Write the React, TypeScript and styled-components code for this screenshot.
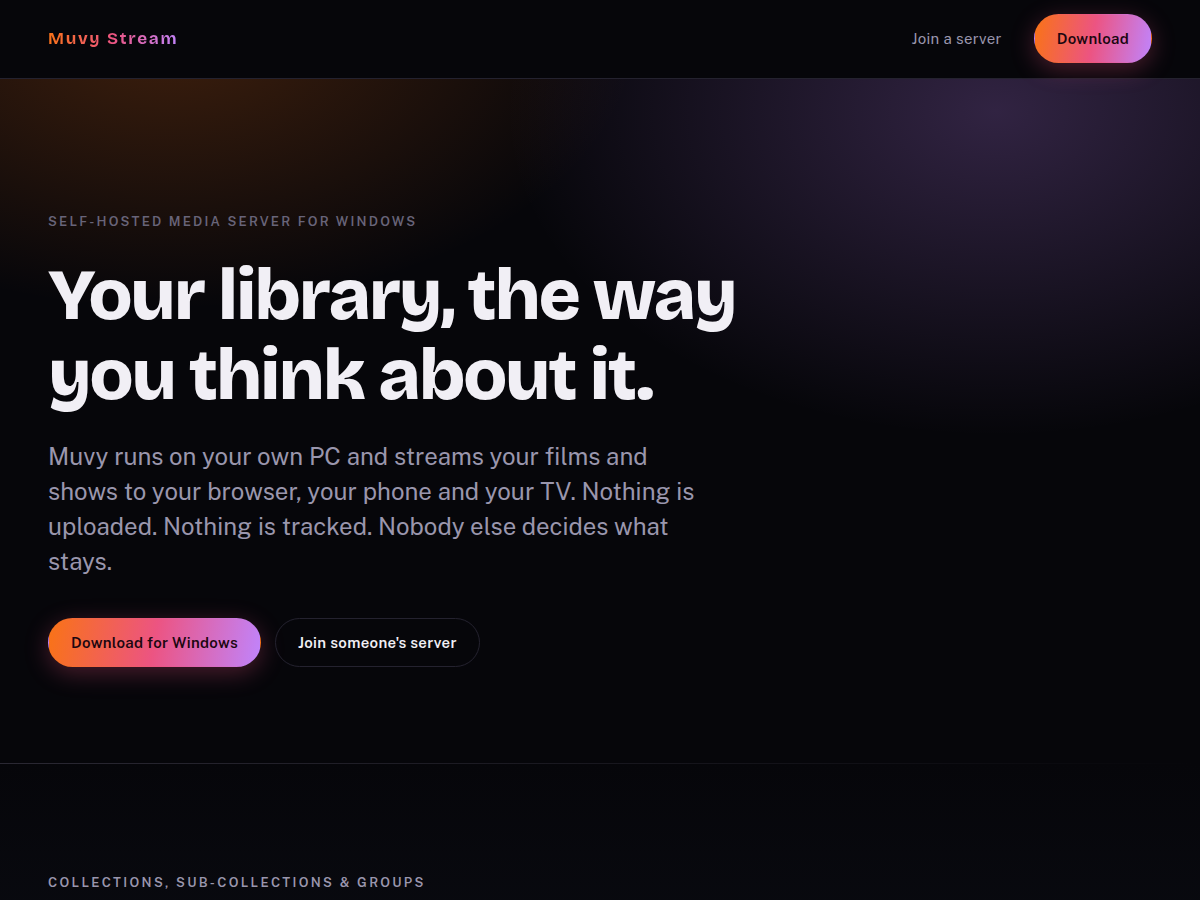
import React from 'react';
import styled, { createGlobalStyle, css } from 'styled-components';

const sans = `"Public Sans", Inter, "Liberation Sans", sans-serif`;
const display = `"Bricolage Grotesque", Inter, "Liberation Sans", sans-serif`;
const brandGradient = 'linear-gradient(100deg, #f97316 0%, #ec5482 50%, #c084fc 100%)';

const GlobalStyle = createGlobalStyle`
  *, *::before, *::after { box-sizing: border-box; }
  body {
    margin: 0;
    background: #06060a;
    color: #f1eff5;
    font-family: ${sans};
    font-size: 15px;
    -webkit-font-smoothing: antialiased;
  }
  h1, p { margin: 0; }
`;

const Header = styled.header`
  position: relative;
  z-index: 1;
  display: flex;
  align-items: center;
  justify-content: space-between;
  padding: 14px 48px 15px;
  border-bottom: 1px solid #24222f;
  background: #06060a;
`;

const Brand = styled.a`
  font-family: ${display};
  font-size: 17px;
  line-height: 24px;
  font-weight: 700;
  letter-spacing: 0.1em;
  text-decoration: none;
  color: transparent;
  background: ${brandGradient};
  background-clip: text;
  -webkit-background-clip: text;
`;

const Nav = styled.nav`
  display: flex;
  align-items: center;
  gap: 32px;
`;

const NavLink = styled.a`
  color: #9a96ad;
  font-size: 15px;
  letter-spacing: 0.02em;
  text-decoration: none;
`;

const ButtonLink = styled.a<{ $primary?: boolean }>`
  display: inline-flex;
  align-items: center;
  height: 49px;
  padding: 0 22px;
  border: 1px solid #24222f;
  border-radius: 999px;
  font-size: 15px;
  font-weight: 600;
  letter-spacing: 0.02em;
  text-decoration: none;
  white-space: nowrap;
  color: #f1eff5;
  ${({ $primary }) =>
    $primary &&
    css`
      border-color: transparent;
      background: ${brandGradient};
      color: #1c0710;
      box-shadow: 0 6px 24px rgba(236, 84, 130, 0.3);
    `}
`;

const Hero = styled.section`
  padding: 133px 48px 96px;
  background:
    radial-gradient(490px 325px at 83% 32px, rgba(192, 132, 252, 0.23), transparent),
    radial-gradient(470px 280px at 14% -50px, rgba(249, 115, 22, 0.23), transparent);
`;

const Eyebrow = styled.p<{ $bright?: boolean }>`
  font-size: 13px;
  line-height: 20px;
  font-weight: 600;
  letter-spacing: ${({ $bright }) => ($bright ? '0.18em' : '0.17em')};
  text-transform: uppercase;
  color: ${({ $bright }) => ($bright ? '#9a96ad' : '#686479')};
`;

const Title = styled.h1`
  margin-top: 23px;
  max-width: 760px;
  font-family: ${display};
  font-size: 72px;
  line-height: 80px;
  font-weight: 800;
  letter-spacing: -0.03em;
`;

const Lead = styled.p`
  margin-top: 24px;
  max-width: 660px;
  font-size: 24px;
  line-height: 35px;
  color: #9a96ad;
`;

const Actions = styled.div`
  display: flex;
  flex-wrap: wrap;
  gap: 14px;
  margin-top: 39px;
`;

const Section = styled.section`
  padding: 0 48px 112px;
  background: linear-gradient(180deg, #06060a 0, #090a10 180px);
`;

const Rule = styled.div`
  height: 1px;
  margin: 0 -48px 109px;
  background: linear-gradient(90deg, #2a2833, transparent);
`;

export default function App() {
  return (
    <>
      <GlobalStyle />
      <Header>
        <Brand href="#top">Muvy Stream</Brand>
        <Nav>
          <NavLink href="#join">Join a server</NavLink>
          <ButtonLink $primary href="#download">Download</ButtonLink>
        </Nav>
      </Header>
      <main>
        <Hero id="top">
          <Eyebrow>Self-hosted media server for Windows</Eyebrow>
          <Title>Your library, the way you think about it.</Title>
          <Lead>
            Muvy runs on your own PC and streams your films and shows to your browser, your phone
            and your TV. Nothing is uploaded. Nothing is tracked. Nobody else decides what stays.
          </Lead>
          <Actions>
            <ButtonLink $primary href="#download">Download for Windows</ButtonLink>
            <ButtonLink href="#join">Join someone's server</ButtonLink>
          </Actions>
        </Hero>
        <Section>
          <Rule />
          <Eyebrow $bright>Collections, sub-collections &amp; groups</Eyebrow>
        </Section>
      </main>
    </>
  );
}
